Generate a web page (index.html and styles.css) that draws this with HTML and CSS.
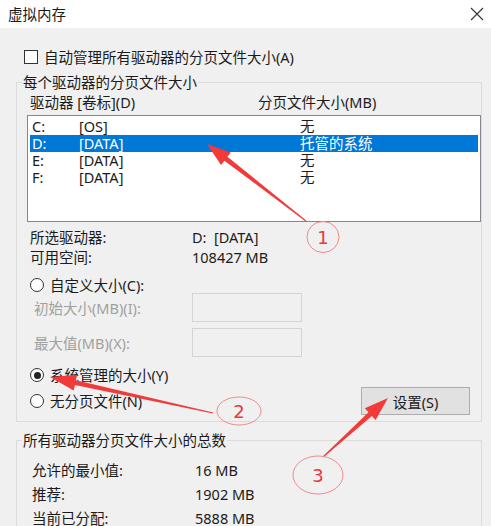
FILE: index.html
```html
<!DOCTYPE html>
<html lang="zh-CN">
<head>
    <meta charset="UTF-8">
    <meta name="viewport" content="width=device-width, initial-scale=1.0">
    <title>虚拟内存</title>
    <link rel="stylesheet" href="styles.css">
</head>
<body>
    <div class="dialog">
        <div class="titlebar">
            <span class="title">虚拟内存</span>
            <svg class="close" width="14" height="14" viewBox="0 0 14 14">
                <path d="M1 1 L13 13 M13 1 L1 13" stroke="#333" stroke-width="1.1" fill="none"/>
            </svg>
        </div>

        <div class="content">
            <div class="check"><span class="box"></span>自动管理所有驱动器的分页文件大小(A)</div>

            <fieldset class="group">
                <legend>每个驱动器的分页文件大小</legend>

                <div class="cols">
                    <span class="col-drive">驱动器 [卷标](D)</span>
                    <span>分页文件大小(MB)</span>
                </div>

                <div class="list">
                    <div class="row"><span class="c1">C:</span><span class="c2">[OS]</span><span>无</span></div>
                    <div class="row sel"><span class="c1">D:</span><span class="c2">[DATA]</span><span>托管的系统</span></div>
                    <div class="row"><span class="c1">E:</span><span class="c2">[DATA]</span><span>无</span></div>
                    <div class="row"><span class="c1">F:</span><span class="c2">[DATA]</span><span>无</span></div>
                </div>

                <div class="info">
                    <div class="info-row"><span class="label">所选驱动器:</span><span>D:&nbsp; [DATA]</span></div>
                    <div class="info-row"><span class="label">可用空间:</span><span>108427 MB</span></div>
                </div>

                <div class="radio custom"><span class="dot"></span>自定义大小(C):</div>

                <div class="sizes">
                    <div class="size-row"><span class="label">初始大小(MB)(I):</span><span class="field"></span></div>
                    <div class="size-row"><span class="label">最大值(MB)(X):</span><span class="field"></span></div>
                </div>

                <div class="radio system"><span class="dot on"></span>系统管理的大小(Y)</div>

                <div class="last-row">
                    <div class="radio"><span class="dot"></span>无分页文件(N)</div>
                    <button class="btn">设置(S)</button>
                </div>
            </fieldset>

            <fieldset class="group totals">
                <legend>所有驱动器分页文件大小的总数</legend>
                <div class="total-row"><span class="label">允许的最小值:</span><span>16 MB</span></div>
                <div class="total-row"><span class="label">推荐:</span><span>1902 MB</span></div>
                <div class="total-row"><span class="label">当前已分配:</span><span>5888 MB</span></div>
            </fieldset>
        </div>

        <!-- annotation layer: arrows and numbered circles drawn over the dialog -->
        <svg class="marks" width="491" height="526" viewBox="0 0 491 526">
            <g fill="#f23a3a">
                <polygon points="207,144 230.8,152.4 227.4,156.7 306.3,220.6 305.7,221.4 224.4,160.7 221,165"/>
                <polygon points="50,377 77.1,374.8 75.9,380.2 213.1,412.5 212.9,413.5 74.9,385 73.7,390.4"/>
                <polygon points="388,398 375.6,420 371.9,416 323.3,457.4 322.7,456.6 368.5,412.3 364.8,408.2"/>
            </g>
            <g fill="none" stroke="#f08a8a" stroke-width="1">
                <ellipse cx="323" cy="237" rx="16" ry="15.5"/>
                <ellipse cx="239" cy="411" rx="22" ry="14"/>
                <ellipse cx="318" cy="475" rx="25" ry="19"/>
            </g>
            <g class="num" fill="#e83a3a" text-anchor="middle">
                <text x="323" y="244">1</text>
                <text x="239" y="418">2</text>
                <text x="318" y="482">3</text>
            </g>
        </svg>
    </div>
</body>
</html>
```

FILE: styles.css
```css
* {
    box-sizing: border-box;
}

body {
    margin: 0;
    font-family: "Noto Sans", "Noto Sans CJK SC", sans-serif;
    font-size: 14.5px;
    color: #1b1b1b;
    background-color: #f0f0f0;
    overflow: hidden;
}

.dialog {
    position: relative;
    width: 491px;
    height: 526px;
    overflow: hidden;
}

.titlebar {
    height: 28px;
    background: #fff;
    display: flex;
    align-items: center;
    justify-content: space-between;
    padding: 0 7px 0 8px;
}

.title {
    line-height: 20px;
}

.content {
    padding: 19px 9px 0 16px;
}

.check {
    display: flex;
    align-items: center;
    gap: 6px;
    height: 20px;
    line-height: 20px;
    padding-left: 8px;
}

.box {
    width: 14px;
    height: 14px;
    border: 1px solid #333;
    background: #fff;
}

.group {
    margin: 6px 0 0 0;
    padding: 2px 0 6px 10px;
    border: 1px solid #dcdcdc;
    min-width: 0;
}

.group legend {
    margin-left: -5px;
    padding: 0 1px;
    line-height: 18px;
}

.cols {
    display: flex;
    line-height: 18px;
    padding-left: 3px;
}

.col-drive {
    width: 228px;
}

.list {
    margin-top: 4px;
    height: 107px;
    border: 1px solid #828790;
    background: #fff;
    padding: 2px;
}

.row {
    display: flex;
    height: 17px;
    line-height: 17px;
    padding-left: 2px;
    white-space: nowrap;
}

.row.sel {
    background-color: #0078d7;
    color: #fff;
}

.c1 {
    width: 47px;
}

.c2 {
    width: 221px;
}

.info {
    margin-top: 5px;
    padding-left: 3px;
}

.info-row {
    display: flex;
    line-height: 20px;
}

.info-row .label {
    width: 162px;
}

.radio {
    display: flex;
    align-items: center;
    gap: 6px;
    padding-left: 3px;
    line-height: 20px;
}

.dot {
    position: relative;
    width: 14px;
    height: 14px;
    border: 1px solid #333;
    border-radius: 50%;
    background: #fff;
}

.dot.on::after {
    content: "";
    position: absolute;
    left: 2.5px;
    top: 2.5px;
    width: 7px;
    height: 7px;
    border-radius: 50%;
    background: #222;
}

.radio.custom {
    margin-top: 10px;
    line-height: 16px;
    height: 16px;
}

.sizes {
    display: flex;
    flex-direction: column;
    gap: 6px;
}

.size-row {
    display: flex;
    align-items: center;
    height: 29px;
    padding-left: 7px;
    color: #a0a0a0;
}

.size-row .label {
    width: 158px;
}

.size-row .field {
    width: 110px;
    height: 29px;
    border: 1px solid #d4d4d4;
    background: #f0f0f0;
}

.radio.system {
    margin-top: 8px;
}

.last-row {
    margin-top: 2px;
    height: 28px;
    display: flex;
    align-items: center;
    justify-content: space-between;
}

.btn {
    width: 109px;
    height: 28px;
    margin-right: 11px;
    border: 1px solid #adadad;
    background: #e1e1e1;
    font-family: inherit;
    font-size: 14.5px;
    color: #1b1b1b;
    padding: 0;
}

.group.totals {
    margin-top: 9px;
    padding-top: 9px;
    height: 120px;
}

.total-row {
    display: flex;
    line-height: 24px;
    padding-left: 5px;
}

.total-row .label {
    width: 163px;
}

.marks {
    position: absolute;
    left: 0;
    top: 0;
    pointer-events: none;
}

.num text {
    font-family: "DejaVu Sans", sans-serif;
    font-size: 18px;
}
```
